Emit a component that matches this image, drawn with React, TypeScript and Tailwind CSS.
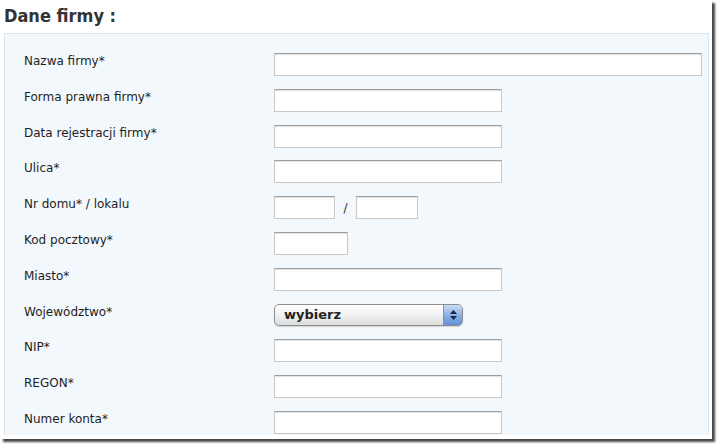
import React from 'react';

const inputCls =
  'h-[23px] bg-white border border-[#c9c9c9] border-t-[#9c9c9c] shadow-[inset_0_1px_1px_rgba(0,0,0,0.12)]';

const Field: React.FC<{ w: string }> = ({ w }) => <div className={`${inputCls} ${w}`} />;

const Row: React.FC<{ label: string; children: React.ReactNode }> = ({ label, children }) => (
  <div className="flex items-start h-[35.8px]">
    <div className="w-[269px] pl-[19px] text-[12px] leading-[14px] text-[#1e1e1e] pt-[1px]">{label}</div>
    <div className="flex items-center">{children}</div>
  </div>
);

const Select: React.FC = () => (
  <div className="w-[189px] h-[22px] rounded-[5px] border border-[#8e8e8e] bg-gradient-to-b from-white via-[#f2f2f2] to-[#dcdcdc] flex items-stretch overflow-hidden shadow-[0_1px_1px_rgba(0,0,0,0.15)]">
    <div className="flex-1 pl-[9px] text-[13px] leading-[20px] font-semibold text-[#222]">wybierz</div>
    <div className="w-[19px] border-l border-[#7b8fb2] bg-gradient-to-b from-[#c9dcf5] via-[#8fb2e6] to-[#5d8fd8] flex flex-col items-center justify-center gap-[2px]">
      <svg width="7" height="4" viewBox="0 0 7 4"><path d="M0 4 L3.5 0 L7 4 Z" fill="#1b2a44" /></svg>
      <svg width="7" height="4" viewBox="0 0 7 4"><path d="M0 0 L3.5 4 L7 0 Z" fill="#1b2a44" /></svg>
    </div>
  </div>
);

const App: React.FC = () => {
  return (
    <div className="w-[720px] h-[446px] bg-white" style={{ fontFamily: '"DejaVu Sans", Verdana, sans-serif' }}>
      <div className="w-[712px] h-[439px] bg-white shadow-[3px_3px_2px_rgba(40,40,40,0.85)]">
        <div className="h-[33px] pl-[4px] pt-[5px] text-[18px] leading-[22px] font-bold text-[#333]" style={{ fontFamily: '"DejaVu Sans Condensed", "DejaVu Sans", sans-serif' }}>
          Dane firmy :
        </div>
        <div className="ml-[4px] w-[705px] h-[402px] bg-[#f3f8fc] border-t border-l border-r border-[#dde5ec] pt-[19px]">
          <Row label="Nazwa firmy*"><Field w="w-[428px]" /></Row>
          <Row label="Forma prawna firmy*"><Field w="w-[228px]" /></Row>
          <Row label="Data rejestracji firmy*"><Field w="w-[228px]" /></Row>
          <Row label="Ulica*"><Field w="w-[228px]" /></Row>
          <Row label="Nr domu* / lokalu">
            <Field w="w-[61px]" />
            <span className="w-[21px] text-center text-[12px] text-[#333]">/</span>
            <Field w="w-[62px]" />
          </Row>
          <Row label="Kod pocztowy*"><Field w="w-[74px]" /></Row>
          <Row label="Miasto*"><Field w="w-[228px]" /></Row>
          <Row label="Województwo*"><Select /></Row>
          <Row label="NIP*"><Field w="w-[228px]" /></Row>
          <Row label="REGON*"><Field w="w-[228px]" /></Row>
          <Row label="Numer konta*"><Field w="w-[228px]" /></Row>
        </div>
      </div>
    </div>
  );
};

export default App;
